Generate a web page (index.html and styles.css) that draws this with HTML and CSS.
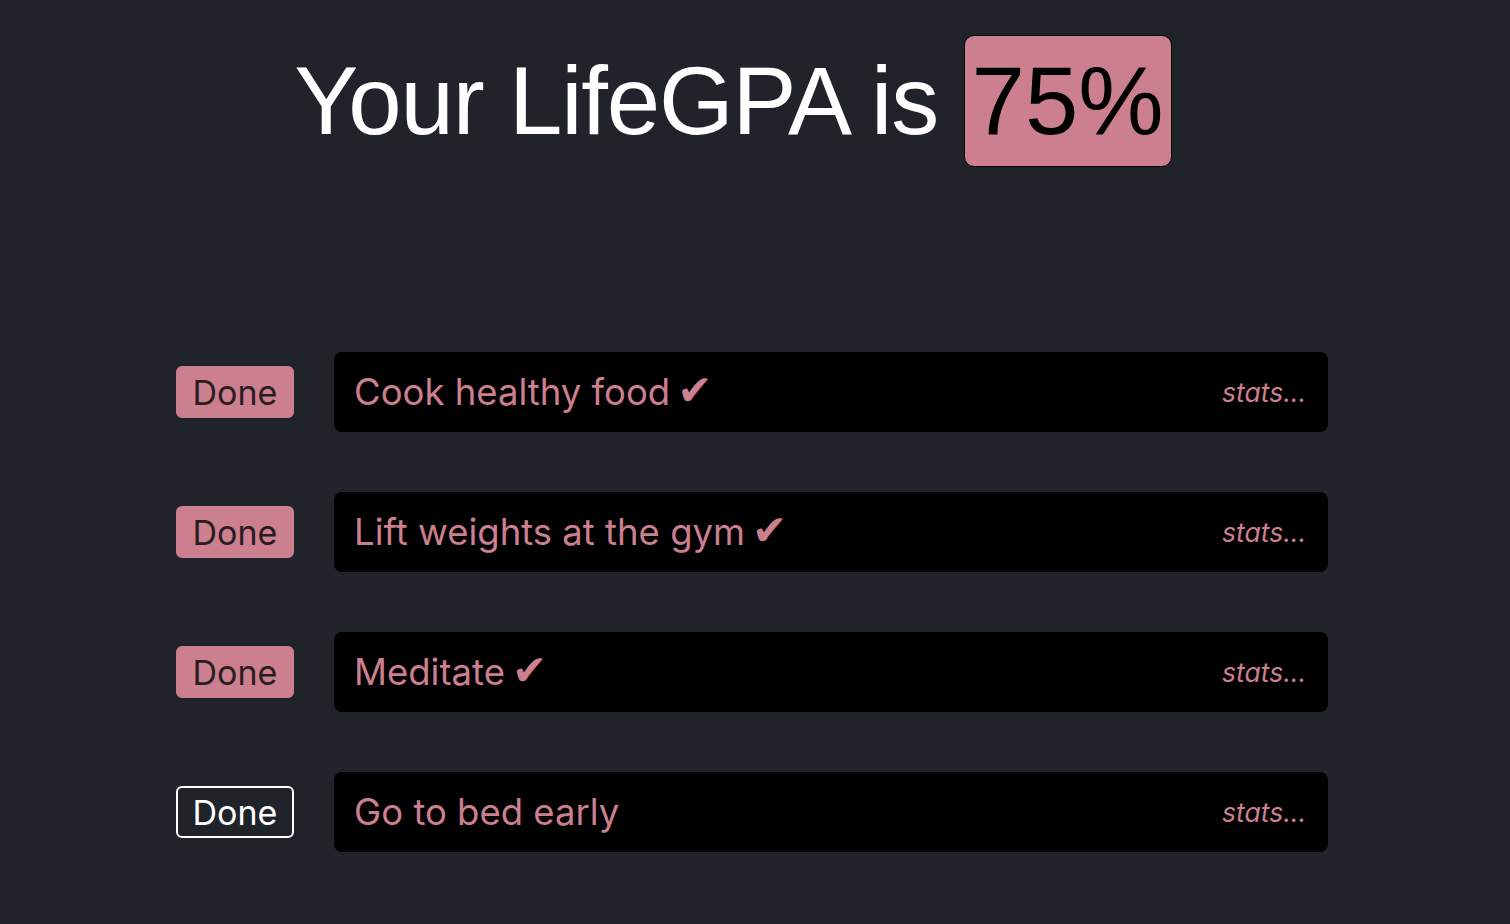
FILE: index.html
```html
<!DOCTYPE html>
<html lang="en">
<head>
<meta charset="utf-8">
<title>LifeGPA</title>
<link rel="stylesheet" href="styles.css">
</head>
<body>
<main class="page">
  <h1 class="title">Your LifeGPA is <span class="score">75%</span></h1>
  <ul class="habits">
    <li class="habit">
      <button class="done done-on">Done</button>
      <div class="habit-card"><span class="habit-name">Cook healthy food<span class="check">✔</span></span><span class="stats">stats...</span></div>
    </li>
    <li class="habit">
      <button class="done done-on">Done</button>
      <div class="habit-card"><span class="habit-name">Lift weights at the gym<span class="check">✔</span></span><span class="stats">stats...</span></div>
    </li>
    <li class="habit">
      <button class="done done-on">Done</button>
      <div class="habit-card"><span class="habit-name">Meditate<span class="check">✔</span></span><span class="stats">stats...</span></div>
    </li>
    <li class="habit">
      <button class="done done-off">Done</button>
      <div class="habit-card"><span class="habit-name">Go to bed early</span><span class="stats">stats...</span></div>
    </li>
  </ul>
</main>
</body>
</html>
```
FILE: styles.css
```css
html, body {
  margin: 0;
  padding: 0;
  background: #21232b;
  height: 100%;
}
body {
  font-family: Inter, "Liberation Sans", sans-serif;
  color: #fff;
}
.page {
  display: flex;
  flex-direction: column;
  align-items: center;
  padding-top: 35px;
}
.title {
  margin: 0 0 0 -44px;
  font-family: "Liberation Sans", Arial, sans-serif;
  font-weight: 400;
  font-size: 96px;
  line-height: 132px;
  color: #fff;
  letter-spacing: -1.2px;
}
.score {
  display: inline-block;
  background: #cc7f8f;
  color: #000;
  border: 1px solid #000;
  border-radius: 10px;
  padding: 0 7px;
  line-height: 130px;
  letter-spacing: 0;
}
.habits {
  list-style: none;
  margin: 185px 0 0 -6px;
  padding: 0;
  display: flex;
  flex-direction: column;
  gap: 60px;
  width: 1152px;
}
.habit {
  display: flex;
  align-items: center;
  gap: 40px;
}
.done {
  box-sizing: border-box;
  width: 118px;
  height: 52px;
  border-radius: 6px;
  font-family: Inter, "Liberation Sans", sans-serif;
  font-size: 34px;
  padding: 0;
  cursor: pointer;
}
.done-on {
  background: #cc7f8f;
  border: 2px solid #cc7f8f;
  color: #2a1d22;
}
.done-off {
  background: transparent;
  border: 2px solid #fff;
  color: #fff;
}
.habit-card {
  flex: 1;
  height: 80px;
  box-sizing: border-box;
  background: #000;
  border-radius: 8px;
  display: flex;
  align-items: center;
  justify-content: space-between;
  padding: 0 22px 0 20px;
}
.habit-name {
  color: #cc7f8f;
  font-size: 36.5px;
}
.check {
  font-family: "DejaVu Sans", sans-serif;
  font-size: 42px;
  line-height: 1;
  margin-left: 7px;
}
.stats {
  color: #cc7f8f;
  font-style: italic;
  font-size: 26.5px;
}
```
